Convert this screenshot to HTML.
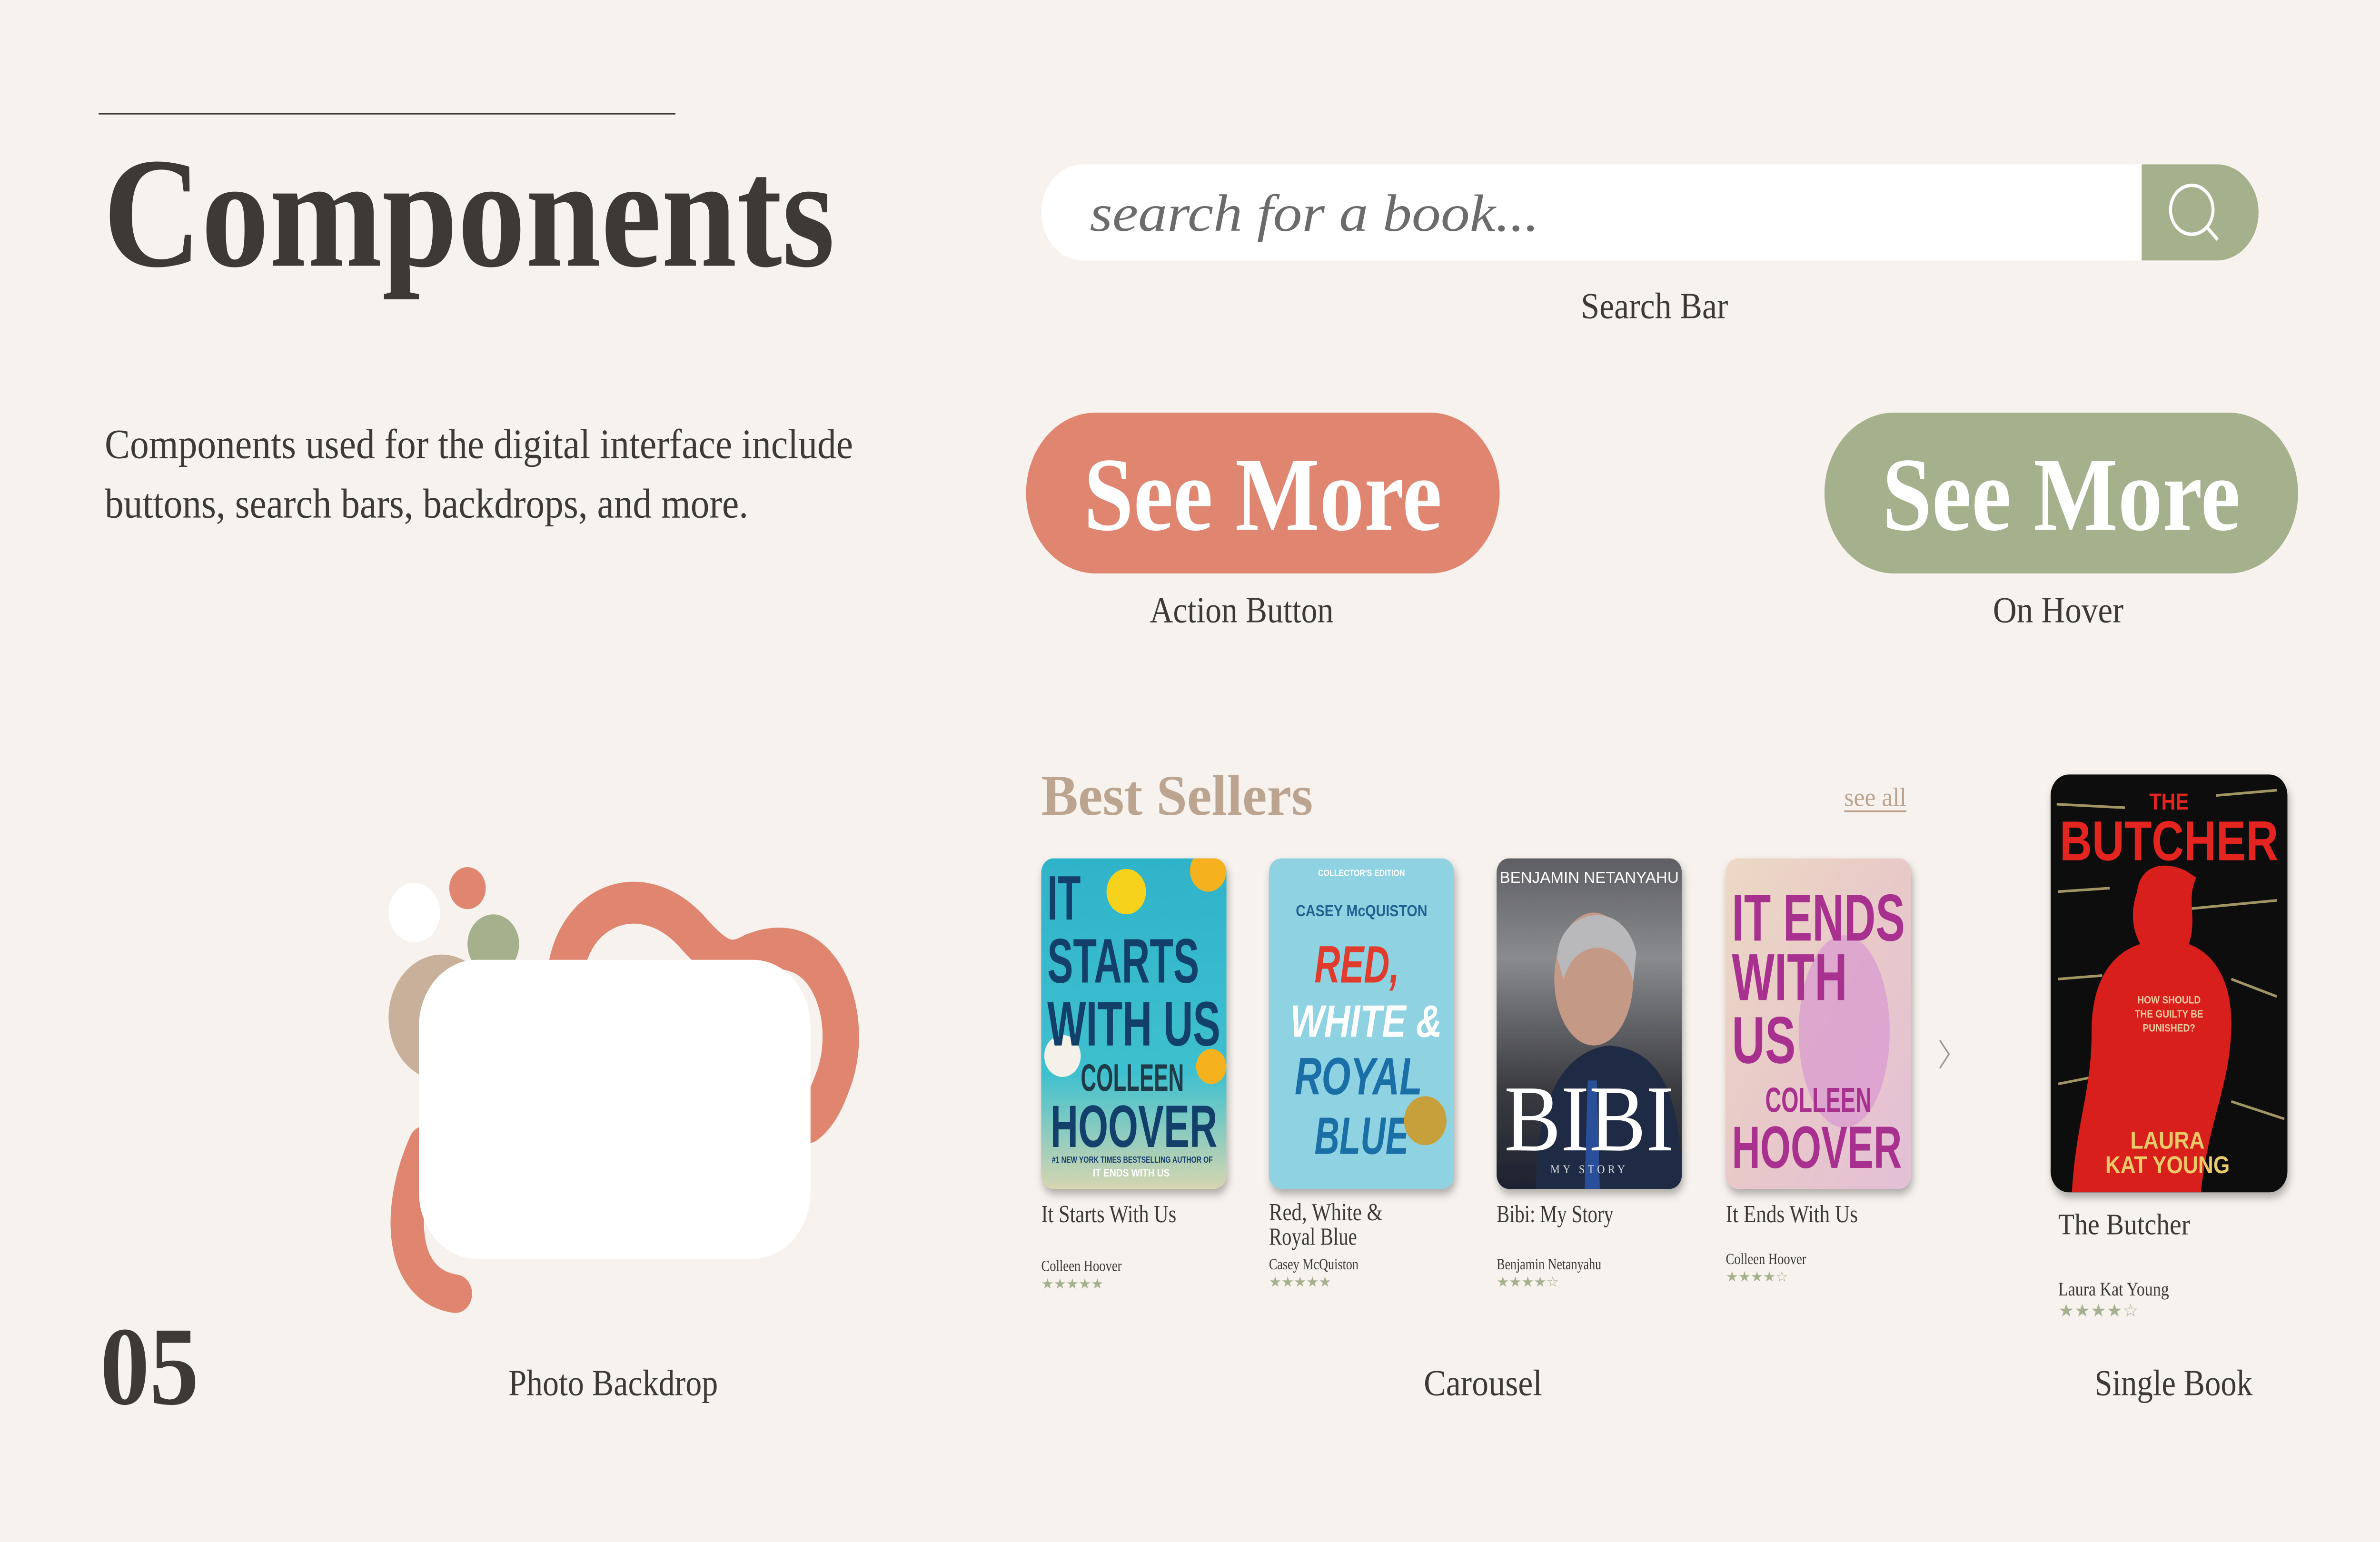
<!DOCTYPE html>
<html><head><meta charset="utf-8"><style>
html,body{margin:0;padding:0;width:100%;height:100%;background:#f7f2ee;overflow:hidden}
svg{position:fixed;left:0;top:0;width:100vw;height:100vh;display:block}
text{font-family:"Liberation Serif",serif;fill:#3d3935}
.s{font-family:"Liberation Sans",sans-serif;font-weight:bold}
.n{font-family:"Liberation Sans Narrow","Liberation Sans",sans-serif;font-weight:bold}
</style></head><body>
<svg viewBox="0 0 1568 882" preserveAspectRatio="none" xmlns="http://www.w3.org/2000/svg">
<defs>
 <filter id="sh" x="-20%" y="-20%" width="140%" height="140%"><feDropShadow dx="1" dy="3" stdDeviation="2.5" flood-opacity="0.3"/></filter>
 <clipPath id="c1"><rect x="686" y="491" width="122" height="189" rx="8"/></clipPath>
 <clipPath id="c2"><rect x="836" y="491" width="122" height="189" rx="8"/></clipPath>
 <clipPath id="c3"><rect x="986" y="491" width="122" height="189" rx="8"/></clipPath>
 <clipPath id="c4"><rect x="1137" y="491" width="122" height="189" rx="8"/></clipPath>
 <clipPath id="c5"><rect x="1351" y="443" width="156" height="239" rx="12"/></clipPath>
 <clipPath id="sb"><rect x="686" y="94" width="802" height="55" rx="27.5"/></clipPath>
 <linearGradient id="g1" x1="0" y1="0" x2="0" y2="1"><stop offset="0" stop-color="#2fb3c9"/><stop offset=".65" stop-color="#3ec0cf"/><stop offset="1" stop-color="#d6d6b0"/></linearGradient>
 <linearGradient id="g3" x1="0" y1="0" x2="0" y2="1"><stop offset="0" stop-color="#5e5f63"/><stop offset=".3" stop-color="#8a8b8e"/><stop offset=".7" stop-color="#3a3b40"/><stop offset="1" stop-color="#1e2230"/></linearGradient>
 <linearGradient id="g4" x1="0" y1="0" x2="1" y2="1"><stop offset="0" stop-color="#ecd9c4"/><stop offset=".5" stop-color="#e8c9c8"/><stop offset="1" stop-color="#e4bfd7"/></linearGradient>
</defs>
<rect width="1568" height="882" fill="#f7f2ee"/>

<line x1="65" y1="65" x2="445" y2="65" stroke="#3d3935" stroke-width="1"/>
<text x="68" y="152" font-size="90" font-weight="bold" textLength="482" lengthAdjust="spacingAndGlyphs">Components</text>
<text x="69" y="262" font-size="24" textLength="493" lengthAdjust="spacingAndGlyphs">Components used for the digital interface include</text>
<text x="69" y="296" font-size="24" textLength="424" lengthAdjust="spacingAndGlyphs">buttons, search bars, backdrops, and more.</text>

<g clip-path="url(#sb)">
 <rect x="686" y="94" width="802" height="55" fill="#fff"/>
 <rect x="1411" y="94" width="77" height="55" fill="#a5b08c"/>
</g>
<text x="718" y="132" font-size="30" font-style="italic" style="fill:#6b6b6b" textLength="296" lengthAdjust="spacingAndGlyphs">search for a book...</text>
<circle cx="1444" cy="120" r="14" fill="none" stroke="#fff" stroke-width="2"/>
<line x1="1454" y1="130" x2="1461" y2="137" stroke="#fff" stroke-width="2"/>
<text x="1090" y="182" font-size="21" text-anchor="middle" textLength="97" lengthAdjust="spacingAndGlyphs">Search  Bar</text>

<rect x="676" y="236" width="312" height="92" rx="46" fill="#e08670"/>
<text x="832" y="303" font-size="60" font-weight="bold" text-anchor="middle" style="fill:#fff" textLength="236" lengthAdjust="spacingAndGlyphs">See More</text>
<rect x="1202" y="236" width="312" height="92" rx="46" fill="#a5b08c"/>
<text x="1358" y="303" font-size="60" font-weight="bold" text-anchor="middle" style="fill:#fff" textLength="236" lengthAdjust="spacingAndGlyphs">See More</text>
<text x="818" y="356" font-size="21" text-anchor="middle" textLength="121" lengthAdjust="spacingAndGlyphs">Action Button</text>
<text x="1356" y="356" font-size="21" text-anchor="middle" textLength="86" lengthAdjust="spacingAndGlyphs">On Hover</text>

<!-- backdrop -->
<path d="M372,565 C372,520 420,500 455,532 C475,552 482,552 495,546 C545,528 565,585 548,620 C543,632 538,638 532,642" fill="none" stroke="#e08670" stroke-width="24" stroke-linecap="round"/>
<path d="M280,655 C262,690 262,735 300,740" fill="none" stroke="#e08670" stroke-width="22" stroke-linecap="round"/>
<circle cx="273" cy="522" r="17" fill="#fff"/>
<circle cx="308" cy="508" r="12" fill="#e08670"/>
<circle cx="325" cy="540" r="17" fill="#a5b08c"/>
<ellipse cx="291" cy="582" rx="35" ry="36" fill="#c9b09a"/>
<rect x="276" y="549" width="258" height="171" rx="38" fill="#fff"/>

<text x="66" y="803" font-size="64" font-weight="bold" textLength="65" lengthAdjust="spacingAndGlyphs">05</text>
<text x="404" y="798" font-size="21" text-anchor="middle" textLength="138" lengthAdjust="spacingAndGlyphs">Photo Backdrop</text>
<text x="977" y="798" font-size="21" text-anchor="middle" textLength="78" lengthAdjust="spacingAndGlyphs">Carousel</text>
<text x="1432" y="798" font-size="21" text-anchor="middle" textLength="104" lengthAdjust="spacingAndGlyphs">Single Book</text>

<text x="686" y="466" font-size="33" font-weight="bold" style="fill:#bca590" textLength="179" lengthAdjust="spacingAndGlyphs">Best Sellers</text>
<text x="1215" y="461" font-size="15" style="fill:#bca590" textLength="41" lengthAdjust="spacingAndGlyphs">see all</text>
<line x1="1215" y1="464" x2="1256" y2="464" stroke="#bca590" stroke-width="1"/>

<!-- book 1 -->
<g filter="url(#sh)"><rect x="686" y="491" width="122" height="189" rx="8" fill="url(#g1)"/></g>
<g clip-path="url(#c1)">
 <circle cx="742" cy="510" r="13" fill="#f6d21c"/>
 <circle cx="796" cy="498" r="12" fill="#f5b21e"/>
 <circle cx="700" cy="604" r="12" fill="#f4f1e8"/>
 <circle cx="798" cy="610" r="10" fill="#f5b21e"/>
 <text class="n" x="690" y="526" font-size="36" style="fill:#13406b" textLength="22" lengthAdjust="spacingAndGlyphs">IT</text>
 <text class="n" x="690" y="562" font-size="36" style="fill:#13406b" textLength="100" lengthAdjust="spacingAndGlyphs">STARTS</text>
 <text class="n" x="690" y="598" font-size="36" style="fill:#13406b" textLength="114" lengthAdjust="spacingAndGlyphs">WITH US</text>
 <text class="n" x="712" y="624" font-size="22" style="fill:#1f3b4a" textLength="68" lengthAdjust="spacingAndGlyphs">COLLEEN</text>
 <text class="n" x="692" y="656" font-size="34" style="fill:#13406b" textLength="110" lengthAdjust="spacingAndGlyphs">HOOVER</text>
 <text class="n" x="693" y="665" font-size="5" style="fill:#13406b" textLength="106" lengthAdjust="spacingAndGlyphs">#1 NEW YORK TIMES BESTSELLING AUTHOR OF</text>
 <text class="n" x="720" y="673" font-size="6" style="fill:#fff">IT ENDS WITH US</text>
</g>
<!-- book 2 -->
<g filter="url(#sh)"><rect x="836" y="491" width="122" height="189" rx="8" fill="#8fd3e3"/></g>
<g clip-path="url(#c2)">
 <text class="s" x="897" y="501" font-size="5" text-anchor="middle" style="fill:#fff">COLLECTOR'S EDITION</text>
 <text class="s" x="897" y="524" font-size="9" text-anchor="middle" style="fill:#20618f">CASEY McQUISTON</text>
 <text class="s" x="866" y="562" font-size="30" font-style="italic" style="fill:#e13b2e" textLength="56" lengthAdjust="spacingAndGlyphs">RED,</text>
 <text class="s" x="850" y="593" font-size="26" font-style="italic" style="fill:#fff" textLength="100" lengthAdjust="spacingAndGlyphs">WHITE &amp;</text>
 <text class="s" x="853" y="626" font-size="30" font-style="italic" style="fill:#1a6fa7" textLength="84" lengthAdjust="spacingAndGlyphs">ROYAL</text>
 <text class="s" x="866" y="660" font-size="30" font-style="italic" style="fill:#1a6fa7" textLength="62" lengthAdjust="spacingAndGlyphs">BLUE</text>
 <circle cx="939" cy="641" r="14" fill="#c6a03a"/>
</g>
<!-- book 3 -->
<g filter="url(#sh)"><rect x="986" y="491" width="122" height="189" rx="8" fill="url(#g3)"/></g>
<g clip-path="url(#c3)">
 <path d="M1012,680 C1012,615 1040,600 1060,598 C1090,600 1108,620 1108,680 Z" fill="#1f2a44"/>
 <path d="M1046,618 L1052,618 L1054,680 L1044,680 Z" fill="#2a4f9a"/>
 <ellipse cx="1050" cy="560" rx="26" ry="38" fill="#c49a86"/>
 <path d="M1026,548 C1026,520 1070,512 1078,545 L1076,562 C1072,540 1040,532 1030,560 Z" fill="#b9b9bb"/>
 <text class="s" x="1047" y="505" font-size="9" font-weight="normal" text-anchor="middle" style="fill:#fff;font-weight:normal" textLength="118" lengthAdjust="spacingAndGlyphs">BENJAMIN NETANYAHU</text>
 <text x="1047" y="658" font-size="54" text-anchor="middle" style="fill:#fff" textLength="112" lengthAdjust="spacingAndGlyphs">BIBI</text>
 <text x="1047" y="671" font-size="7" text-anchor="middle" style="fill:#ddd;letter-spacing:2px">MY STORY</text>
</g>
<!-- book 4 -->
<g filter="url(#sh)"><rect x="1137" y="491" width="122" height="189" rx="8" fill="url(#g4)"/></g>
<g clip-path="url(#c4)">
 <ellipse cx="1215" cy="590" rx="30" ry="55" fill="#d99bd0" opacity=".75"/>
 <text class="n" x="1141" y="538" font-size="38" style="fill:#a8318f" textLength="114" lengthAdjust="spacingAndGlyphs">IT ENDS</text>
 <text class="n" x="1141" y="572" font-size="38" style="fill:#a8318f" textLength="76" lengthAdjust="spacingAndGlyphs">WITH</text>
 <text class="n" x="1141" y="608" font-size="38" style="fill:#a8318f" textLength="42" lengthAdjust="spacingAndGlyphs">US</text>
 <text class="n" x="1163" y="636" font-size="20" style="fill:#a8318f" textLength="70" lengthAdjust="spacingAndGlyphs">COLLEEN</text>
 <text class="n" x="1141" y="668" font-size="34" style="fill:#a8318f" textLength="112" lengthAdjust="spacingAndGlyphs">HOOVER</text>
</g>
<path d="M1278,595 L1284,603 L1278,611" fill="none" stroke="#999" stroke-width="1"/>

<!-- butcher -->
<g filter="url(#sh)"><rect x="1351" y="443" width="156" height="239" rx="12" fill="#0d0b0b"/></g>
<g clip-path="url(#c5)">
 <g stroke="#c9b77a" stroke-width="1.5" fill="none" opacity=".8">
  <path d="M1355,460 L1400,462 M1460,455 L1500,452 M1356,510 L1390,508 M1440,520 L1500,515 M1356,560 L1385,558 M1470,560 L1500,570 M1356,620 L1385,615 M1470,630 L1505,640"/>
 </g>
 <path d="M1408,510 C1410,495 1425,492 1440,498 L1447,502 C1440,515 1448,525 1442,540 C1458,545 1470,560 1470,585 C1470,620 1455,640 1450,682 L1365,682 C1368,640 1378,625 1378,590 C1378,560 1392,545 1410,540 C1404,530 1404,520 1408,510 Z" fill="#d81f1c"/>
 <text class="n" x="1429" y="463" font-size="13" text-anchor="middle" style="fill:#e4241f">THE</text>
 <text class="n" x="1429" y="492" font-size="32" text-anchor="middle" style="fill:#e4241f" textLength="144" lengthAdjust="spacingAndGlyphs">BUTCHER</text>
 <text class="n" x="1429" y="574" font-size="6" text-anchor="middle" style="fill:#f3c9a0">HOW SHOULD</text>
 <text class="n" x="1429" y="582" font-size="6" text-anchor="middle" style="fill:#f3c9a0">THE GUILTY BE</text>
 <text class="n" x="1429" y="590" font-size="6" text-anchor="middle" style="fill:#f3c9a0">PUNISHED?</text>
 <text class="n" x="1428" y="657" font-size="14" text-anchor="middle" style="fill:#e9c96a">LAURA</text>
 <text class="n" x="1428" y="671" font-size="14" text-anchor="middle" style="fill:#e9c96a" textLength="82" lengthAdjust="spacingAndGlyphs">KAT YOUNG</text>
</g>

<text x="686" y="699" font-size="14" textLength="89" lengthAdjust="spacingAndGlyphs">It Starts With Us</text>
<text x="686" y="727" font-size="9" textLength="53" lengthAdjust="spacingAndGlyphs">Colleen Hoover</text>
<text x="686" y="737" font-size="8" style="fill:#a5b08c" textLength="41" lengthAdjust="spacingAndGlyphs">★★★★★</text>
<text x="836" y="698" font-size="14" textLength="75" lengthAdjust="spacingAndGlyphs">Red, White &amp;</text>
<text x="836" y="712" font-size="14" textLength="58" lengthAdjust="spacingAndGlyphs">Royal Blue</text>
<text x="836" y="726" font-size="9" textLength="59" lengthAdjust="spacingAndGlyphs">Casey McQuiston</text>
<text x="836" y="736" font-size="8" style="fill:#a5b08c" textLength="41" lengthAdjust="spacingAndGlyphs">★★★★★</text>
<text x="986" y="699" font-size="14" textLength="77" lengthAdjust="spacingAndGlyphs">Bibi: My Story</text>
<text x="986" y="726" font-size="9" textLength="69" lengthAdjust="spacingAndGlyphs">Benjamin Netanyahu</text>
<text x="986" y="736" font-size="8" style="fill:#a5b08c" textLength="41" lengthAdjust="spacingAndGlyphs">★★★★☆</text>
<text x="1137" y="699" font-size="14" textLength="87" lengthAdjust="spacingAndGlyphs">It Ends With Us</text>
<text x="1137" y="723" font-size="9" textLength="53" lengthAdjust="spacingAndGlyphs">Colleen Hoover</text>
<text x="1137" y="733" font-size="8" style="fill:#a5b08c" textLength="41" lengthAdjust="spacingAndGlyphs">★★★★☆</text>
<text x="1356" y="706" font-size="17" textLength="87" lengthAdjust="spacingAndGlyphs">The Butcher</text>
<text x="1356" y="741" font-size="11" textLength="73" lengthAdjust="spacingAndGlyphs">Laura Kat Young</text>
<text x="1356" y="753" font-size="10" style="fill:#a5b08c" textLength="53" lengthAdjust="spacingAndGlyphs">★★★★☆</text>
</svg>
</body></html>
